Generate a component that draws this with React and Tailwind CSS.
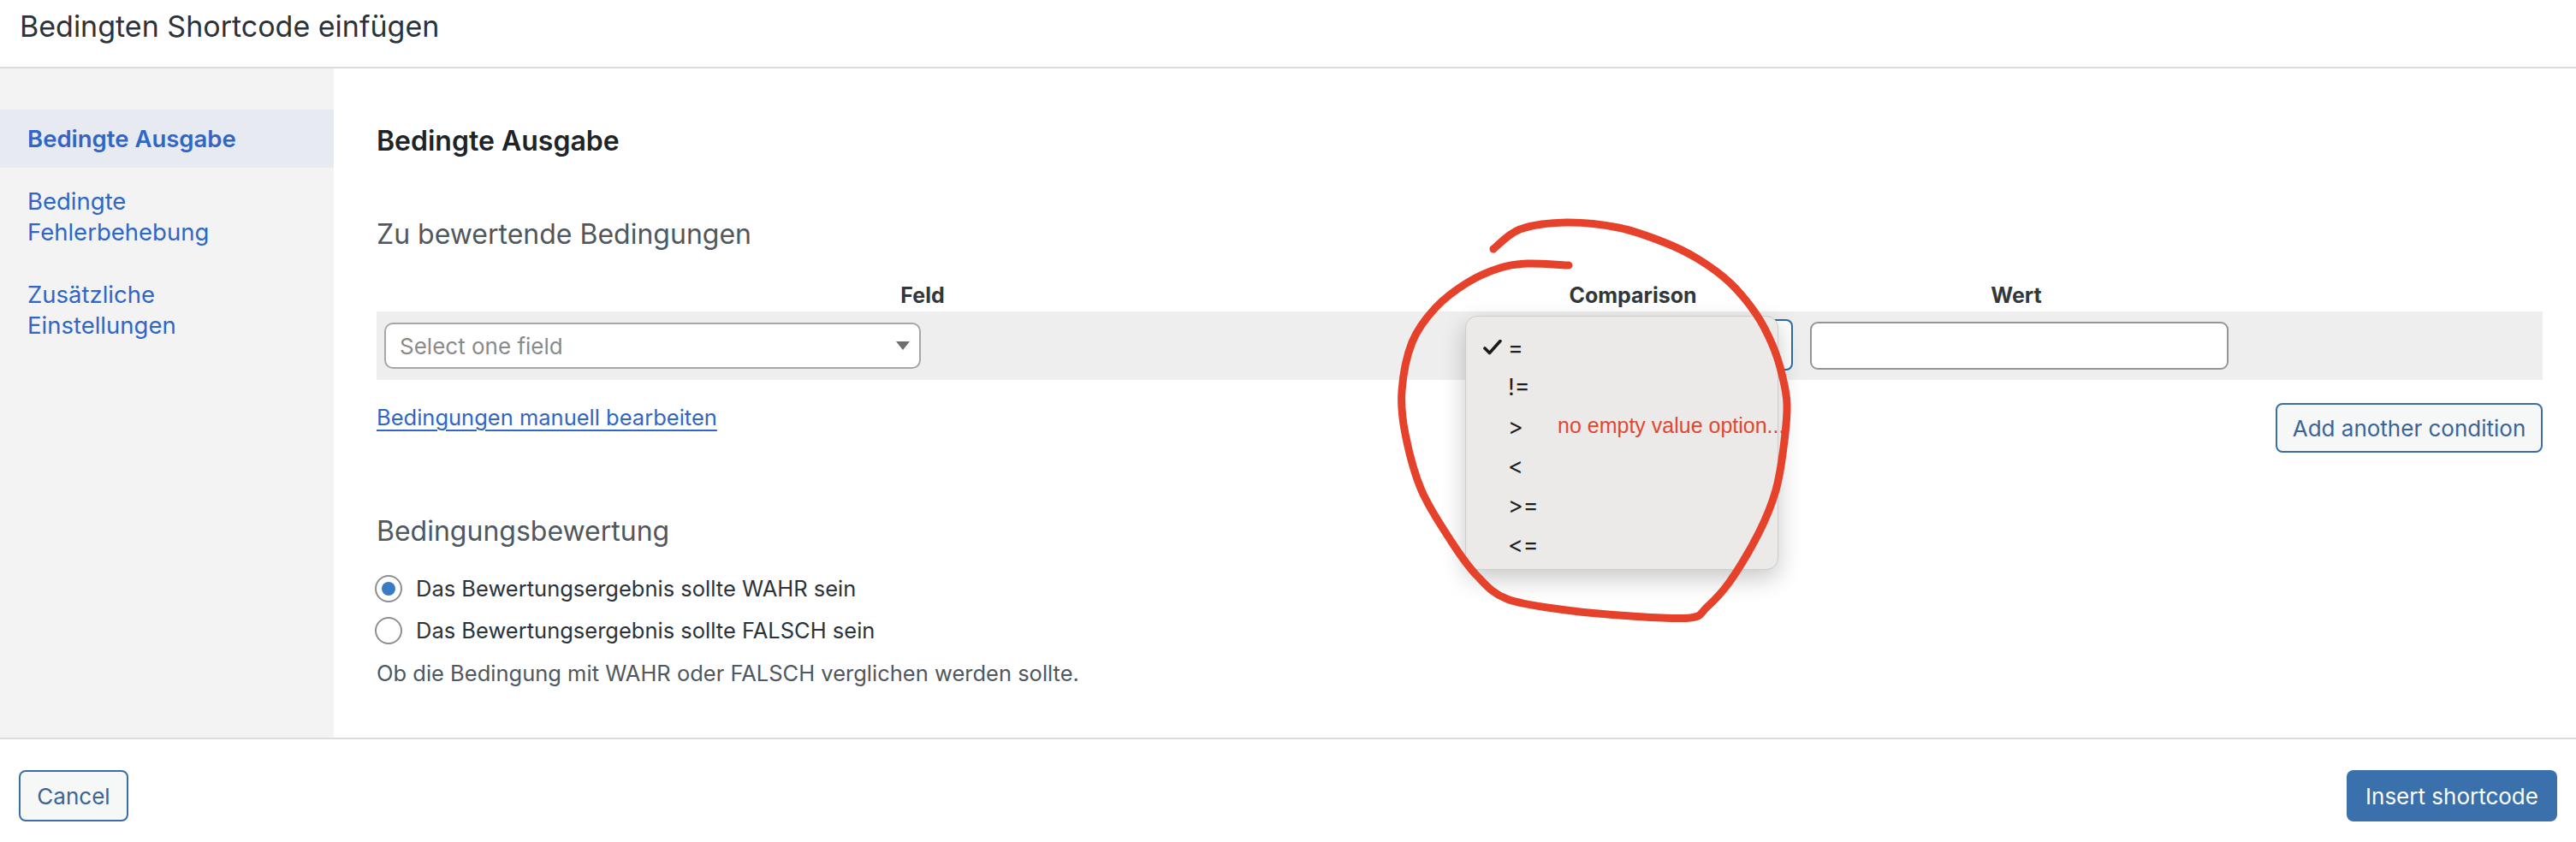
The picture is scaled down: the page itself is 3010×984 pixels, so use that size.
import React from "react";

// Hand-drawn loop around the comparison menu (page coordinates)
const LOOP = [
  [1745, 291], [1776, 268], [1830, 260], [1891, 266], [1944, 283], [1983, 302],
  [2021, 330], [2052, 367], [2071, 403], [2082, 437], [2088, 473], [2084, 523],
  [2075, 573], [2055, 623], [2021, 680], [1994, 710], [1975, 722], [1906, 720],
  [1830, 713], [1761, 700], [1726, 673], [1696, 633], [1661, 573], [1642, 507],
  [1638, 457], [1650, 400], [1677, 360], [1715, 330], [1753, 313], [1784, 308],
  [1833, 310],
];

function smoothPath(pts) {
  let d = `M${pts[0][0]} ${pts[0][1]}`;
  for (let i = 0; i < pts.length - 1; i++) {
    const p0 = pts[i - 1] || pts[i];
    const p1 = pts[i];
    const p2 = pts[i + 1];
    const p3 = pts[i + 2] || p2;
    const c1x = p1[0] + (p2[0] - p0[0]) / 6;
    const c1y = p1[1] + (p2[1] - p0[1]) / 6;
    const c2x = p2[0] - (p3[0] - p1[0]) / 6;
    const c2y = p2[1] - (p3[1] - p1[1]) / 6;
    d += ` C${c1x.toFixed(1)} ${c1y.toFixed(1)} ${c2x.toFixed(1)} ${c2y.toFixed(1)} ${p2[0]} ${p2[1]}`;
  }
  return d;
}

const LOOP_D = smoothPath(LOOP);

const OPERATORS = ["=", "!=", ">", "<", ">=", "<="];

function Check() {
  return (
    <svg width="22" height="18" viewBox="0 0 22 18" className="block">
      <path d="M2 10 L7.5 15.5 L20 1.5" fill="none" stroke="#1a1a1a" strokeWidth="3.6" strokeLinecap="round" strokeLinejoin="round" />
    </svg>
  );
}

function ComparisonMenu() {
  return (
    <div className="absolute left-[-4px] top-[5px] z-10 w-[366px] h-[297px] rounded-[14px] border border-[#cdcdcd] bg-[#ebeae8] pt-[13px] shadow-[0_10px_28px_rgba(0,0,0,0.22)]">
      {OPERATORS.map((op, i) => (
        <div key={op} className="relative flex h-[46px] items-center text-[27px] text-[#1f1f1f]">
          <div className="flex w-[49px] justify-end pr-[7px]">{i === 0 ? <Check /> : null}</div>
          <span className="leading-none">{op}</span>
          {op === ">" ? (
            <span className="absolute left-[107px] whitespace-nowrap font-['Liberation_Sans',Arial,sans-serif] text-[25px] text-[#e2472f]">
              no empty value option...
            </span>
          ) : null}
        </div>
      ))}
    </div>
  );
}

function Radio({ checked, label }) {
  return (
    <label className="flex h-[40px] items-center">
      <span className="ml-[-2px] flex h-[32px] w-[32px] items-center justify-center rounded-full border-2 border-[#8c8f94] bg-white">
        {checked ? <span className="h-[16px] w-[16px] rounded-full bg-[#3a7bc6]" /> : null}
      </span>
      <span className="ml-[16px] text-[25.5px] text-[#2c3338]">{label}</span>
    </label>
  );
}

export default function App() {
  return (
    <div className="relative h-[984px] w-[3010px] overflow-hidden bg-white font-['Inter','Noto_Sans',sans-serif]">
      {/* Dialog title */}
      <header className="h-[80px] border-b-2 border-[#dcdcde] px-[23px] pt-[11px]">
        <h1 className="text-[34px] leading-[40px] text-[#2c3338]">Bedingten Shortcode einfügen</h1>
      </header>

      <div className="flex h-[782px]">
        {/* Sidebar navigation */}
        <nav className="flex w-[390px] flex-col gap-[5px] bg-[#f3f3f3] pt-[48px]">
          <a className="block bg-[#e8eaf2] px-[32px] py-[16px] text-[27.5px] font-semibold leading-[36px] text-[#2f66c7]">Bedingte Ausgabe</a>
          <a className="block px-[32px] py-[16px] text-[27.5px] leading-[36px] text-[#2f66c7]">
            Bedingte
            <br />
            Fehlerbehebung
          </a>
          <a className="block px-[32px] py-[16px] text-[27.5px] leading-[36px] text-[#2f66c7]">
            Zusätzliche
            <br />
            Einstellungen
          </a>
        </nav>

        {/* Main panel */}
        <main className="flex-1 pl-[50px] pr-[39px] pt-[65px]">
          <h2 className="text-[32px] font-semibold leading-[40px] text-[#1d2327]">Bedingte Ausgabe</h2>

          <h3 className="mt-[69px] text-[32px] leading-[40px] text-[#50575e]">Zu bewertende Bedingungen</h3>

          <div className="mt-[36px] grid grid-cols-[1276px_384px_512px_1fr] text-center text-[25px] font-bold leading-[30px] text-[#32373c]">
            <div>Feld</div>
            <div>Comparison</div>
            <div>Wert</div>
            <div />
          </div>

          <div className="mt-[4px] grid h-[80px] grid-cols-[1276px_384px_512px_1fr] bg-[#eeeeee]">
            <div>
              <div className="ml-[9px] mt-[13px] flex h-[54px] w-[627px] items-center justify-between rounded-[10px] border-2 border-[#a7a7a7] bg-white pl-[16px] pr-[11px]">
                <span className="text-[26px] text-[#8a8a8a]">Select one field</span>
                <svg width="16" height="10" viewBox="0 0 16 10" className="block">
                  <path d="M0 0 H16 L8 10 Z" fill="#6f6f6f" />
                </svg>
              </div>
            </div>
            <div className="relative">
              <div className="ml-[6px] mt-[9px] h-[60px] w-[373px] rounded-[8px] border-2 border-[#2f6aa8] bg-white" />
              <ComparisonMenu />
            </div>
            <div>
              <div className="ml-[15px] mt-[12px] h-[56px] w-[489px] rounded-[9px] border-2 border-[#959595] bg-white" />
            </div>
            <div />
          </div>

          <div className="mt-[27px] flex items-start justify-between">
            <a className="text-[25.5px] leading-[34px] text-[#2f66c7] underline decoration-[2px] underline-offset-[5px]">Bedingungen manuell bearbeiten</a>
            <button className="flex h-[58px] w-[312px] items-center justify-center rounded-[8px] border-2 border-[#3a6ea5] bg-[#f6f7f7] text-[26px] text-[#3a6497]">
              Add another condition
            </button>
          </div>

          <h3 className="mt-[72px] text-[32px] leading-[40px] text-[#50575e]">Bedingungsbewertung</h3>

          <div className="mt-[27px] flex flex-col gap-[9px]">
            <Radio checked label="Das Bewertungsergebnis sollte WAHR sein" />
            <Radio label="Das Bewertungsergebnis sollte FALSCH sein" />
          </div>

          <p className="mt-[10px] text-[25.5px] leading-[40px] text-[#50575e]">Ob die Bedingung mit WAHR oder FALSCH verglichen werden sollte.</p>
        </main>
      </div>

      {/* Dialog actions */}
      <footer className="flex justify-between border-t-2 border-[#dcdcde] px-[22px] pt-[36px]">
        <button className="flex h-[60px] w-[128px] items-center justify-center rounded-[8px] border-2 border-[#3a6ea5] bg-[#f6f7f7] text-[26px] text-[#3a6497]">
          Cancel
        </button>
        <button className="flex h-[60px] w-[246px] items-center justify-center rounded-[8px] bg-[#3a70ab] text-[26px] text-white">
          Insert shortcode
        </button>
      </footer>

      {/* Red marker loop */}
      <svg className="pointer-events-none absolute left-0 top-0 z-20" width="3010" height="984" viewBox="0 0 3010 984">
        <path d={LOOP_D} fill="none" stroke="#e5412b" strokeWidth="9" strokeLinecap="round" strokeLinejoin="round" />
      </svg>
    </div>
  );
}
